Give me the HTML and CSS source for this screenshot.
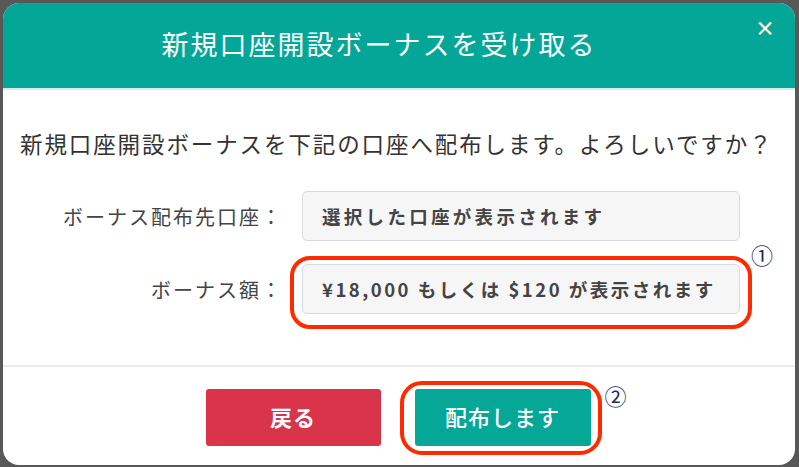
FILE: index.html
```html
<!DOCTYPE html>
<html lang="ja">
<head>
<meta charset="utf-8">
<link rel="stylesheet" href="styles.css">
</head>
<body>
<div class="modal">
  <div class="modal-header">
    <h1 class="modal-title">新規口座開設ボーナスを受け取る</h1>
    <span class="close">×</span>
  </div>
  <div class="modal-body">
    <p class="lead">新規口座開設ボーナスを下記の口座へ配布します。よろしいですか？</p>
    <div class="form">
      <div class="row">
        <div class="label">ボーナス配布先口座：</div>
        <div class="field">選択した口座が表示されます</div>
      </div>
      <div class="row">
        <div class="label">ボーナス額：</div>
        <div class="field marked">¥18,000 もしくは $120 が表示されます
          <span class="ring ring-1"></span>
          <span class="num num-1">①</span>
        </div>
      </div>
    </div>
  </div>
  <div class="modal-footer">
    <button class="btn btn-back">戻る</button>
    <button class="btn btn-ok">配布します
      <span class="ring ring-2"></span>
      <span class="num num-2">②</span>
    </button>
  </div>
</div>
</body>
</html>
```

FILE: styles.css
```css
* { box-sizing: border-box; }
html, body { margin: 0; padding: 0; }
body {
  width: 799px;
  height: 467px;
  background: #585858;
  font-family: "Noto Sans CJK JP", "Noto Sans", sans-serif;
  overflow: hidden;
  padding: 3px 4px 2px 3px;
}
.modal {
  width: 792px;
  height: 462px;
  background: #fff;
  border-radius: 16px;
  overflow: hidden;
  display: flex;
  flex-direction: column;
}
.modal-header {
  height: 87px;
  background: #04a797;
  border-bottom: 2px solid #cfeeea;
  display: flex;
  align-items: center;
  flex-shrink: 0;
}
.modal-title {
  flex: 1;
  margin: 0;
  text-align: center;
  color: #fff;
  font-size: 27px;
  font-weight: normal;
  letter-spacing: 2px;
  line-height: 1;
  padding-bottom: 4px;
}
.close {
  align-self: flex-start;
  margin-top: 15px;
  margin-right: 28px;
  width: 12px;
  color: #fff;
  font-size: 20px;
  font-weight: bold;
  line-height: 1;
}
.modal-body {
  height: 277px;
  border-bottom: 2px solid #ebebf1;
  padding: 36px 0 0 17px;
  flex-shrink: 0;
}
.lead {
  margin: 0;
  color: #333;
  font-size: 22.5px;
  letter-spacing: 1.9px;
  line-height: 34px;
}
.form {
  margin-top: 31px;
  display: flex;
  flex-direction: column;
  gap: 23px;
}
.row {
  display: flex;
  align-items: center;
}
.label {
  width: 263px;
  text-align: right;
  color: #444;
  font-size: 20px;
  letter-spacing: 2px;
  margin-right: 19px;
}
.field {
  position: relative;
  width: 438px;
  height: 50px;
  background: #f6f6f7;
  border: 1px solid #d8dce2;
  border-radius: 5px;
  padding-left: 19px;
  display: flex;
  align-items: center;
  color: #444;
  font-size: 18.5px;
  font-weight: bold;
  letter-spacing: 3.3px;
  white-space: nowrap;
}
.field.marked { letter-spacing: 2.5px; }
.ring {
  position: absolute;
  border: 4px solid #ff2a00;
  pointer-events: none;
}
.ring-1 {
  left: -13px; right: -13px; top: -9px; bottom: -16px;
  border-radius: 20px;
}
.num {
  position: absolute;
  color: #1d2f63;
  font-family: "Noto Sans CJK JP", sans-serif;
  font-weight: normal;
  line-height: 1;
  letter-spacing: 0;
}
.num-1 { left: 448px; top: -22px; font-size: 22px; }
.modal-footer {
  flex: 1;
  display: flex;
  justify-content: center;
  align-items: flex-start;
  gap: 34px;
  padding-top: 22px;
  padding-right: 2px;
}
.btn {
  position: relative;
  height: 57px;
  border: none;
  border-radius: 3px;
  color: #fff;
  font-family: "Noto Sans CJK JP", "Noto Sans", sans-serif;
  font-size: 22px;
  letter-spacing: 1px;
  padding: 0 0 3px 0;
}
.btn-back { width: 175px; background: #d9344a; font-weight: bold; }
.btn-ok { width: 176px; background: #05a797; font-weight: 500; }
.ring-2 {
  left: -15px; right: -11px; top: -8px; bottom: -9px;
  border-radius: 22px;
}
.num-2 { left: 190px; top: -5px; font-size: 22px; }
```
